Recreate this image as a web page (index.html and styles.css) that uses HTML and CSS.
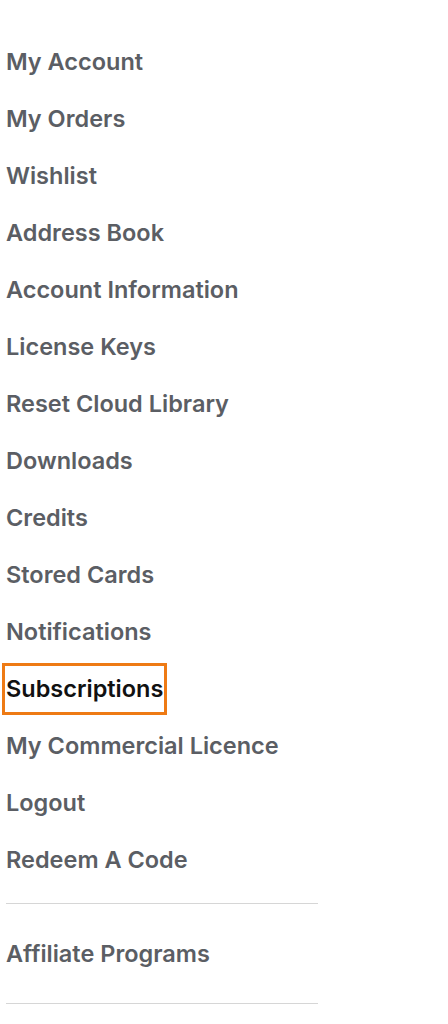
FILE: index.html
```html
<!DOCTYPE html>
<html>
<head>
<meta charset="utf-8">
<link rel="stylesheet" href="styles.css">
</head>
<body>
<nav class="account-nav">
  <ul class="nav-list">
    <li class="nav-item"><a class="nav-link" href="#">My Account</a></li>
    <li class="nav-item"><a class="nav-link" href="#">My Orders</a></li>
    <li class="nav-item"><a class="nav-link" href="#">Wishlist</a></li>
    <li class="nav-item"><a class="nav-link" href="#">Address Book</a></li>
    <li class="nav-item"><a class="nav-link" href="#">Account Information</a></li>
    <li class="nav-item"><a class="nav-link" href="#">License Keys</a></li>
    <li class="nav-item"><a class="nav-link" href="#">Reset Cloud Library</a></li>
    <li class="nav-item"><a class="nav-link" href="#">Downloads</a></li>
    <li class="nav-item"><a class="nav-link" href="#">Credits</a></li>
    <li class="nav-item"><a class="nav-link" href="#">Stored Cards</a></li>
    <li class="nav-item"><a class="nav-link" href="#">Notifications</a></li>
    <li class="nav-item"><a class="nav-link nav-link-active" href="#">Subscriptions</a></li>
    <li class="nav-item"><a class="nav-link" href="#">My Commercial Licence</a></li>
    <li class="nav-item"><a class="nav-link" href="#">Logout</a></li>
    <li class="nav-item"><a class="nav-link" href="#">Redeem A Code</a></li>
  </ul>
  <div class="nav-section">
    <a class="nav-link" href="#">Affiliate Programs</a>
  </div>
</nav>
</body>
</html>
```
FILE: styles.css
```css
html, body {
  margin: 0;
  padding: 0;
  background: #ffffff;
}
body {
  font-family: Inter, "Noto Sans", "Liberation Sans", sans-serif;
}
.account-nav {
  width: 312px;
  padding: 33px 0 0 6px;
}
.nav-list {
  list-style: none;
  margin: 0;
  padding: 0;
}
.nav-item {
  height: 57px;
  display: flex;
  align-items: center;
}
.nav-link {
  display: inline-block;
  font-size: 23.5px;
  font-weight: 600;
  line-height: 44px;
  color: #5b5e64;
  text-decoration: none;
}
.nav-link-active {
  color: #111111;
  outline: 3px solid #ee7a14;
  outline-offset: 1px;
}
.nav-section {
  margin-top: 15px;
  border-top: 1px solid #d6d6d6;
  border-bottom: 1px solid #d6d6d6;
  height: 99px;
  display: flex;
  align-items: center;
}
```
